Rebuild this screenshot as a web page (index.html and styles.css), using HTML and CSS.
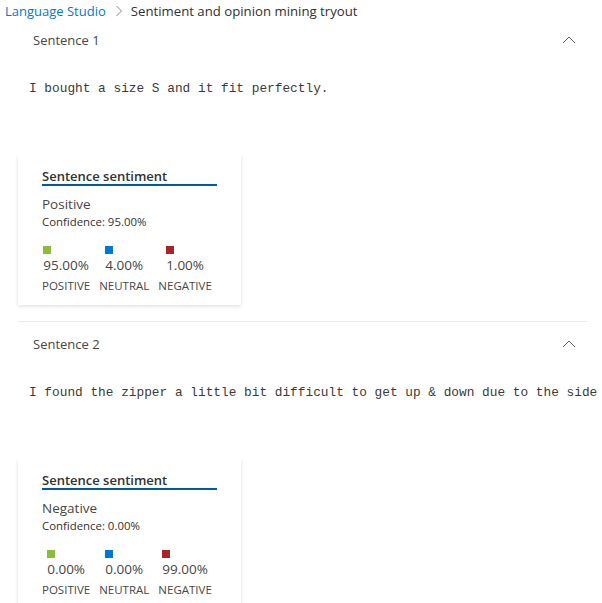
FILE: index.html
```html
<!DOCTYPE html>
<html>
<head>
<meta charset="utf-8">
<link rel="stylesheet" href="styles.css">
</head>
<body>
<nav class="crumbs">
  <a class="crumb-link">Language Studio</a>
  <svg class="crumb-sep" width="8" height="12" viewBox="0 0 8 12"><path d="M1.5 1 L6.5 6 L1.5 11" fill="none" stroke="#8a8886" stroke-width="1"/></svg>
  <span class="crumb-current">Sentiment and opinion mining tryout</span>
</nav>

<section class="sentence">
  <div class="sentence-head">
    <span class="sentence-title">Sentence 1</span>
    <svg class="chev" width="14" height="8" viewBox="0 0 14 8"><path d="M1 7 L7 1 L13 7" fill="none" stroke="#605e5c" stroke-width="1"/></svg>
  </div>
  <div class="sentence-text">I bought a size S and it fit perfectly.</div>
  <div class="card">
    <div class="card-title">Sentence sentiment</div>
    <div class="label-main">Positive</div>
    <div class="confidence">Confidence: 95.00%</div>
    <div class="scores">
      <div class="score"><div class="value"><span class="swatch pos"></span><span class="pct">95.00%</span></div><span class="kind">POSITIVE</span></div>
      <div class="score"><div class="value"><span class="swatch neu"></span><span class="pct">4.00%</span></div><span class="kind">NEUTRAL</span></div>
      <div class="score"><div class="value"><span class="swatch neg"></span><span class="pct">1.00%</span></div><span class="kind">NEGATIVE</span></div>
    </div>
  </div>
</section>

<section class="sentence divided">
  <div class="sentence-head">
    <span class="sentence-title">Sentence 2</span>
    <svg class="chev" width="14" height="8" viewBox="0 0 14 8"><path d="M1 7 L7 1 L13 7" fill="none" stroke="#605e5c" stroke-width="1"/></svg>
  </div>
  <div class="sentence-text">I found the zipper a little bit difficult to get up &amp; down due to the side</div>
  <div class="card">
    <div class="card-title">Sentence sentiment</div>
    <div class="label-main">Negative</div>
    <div class="confidence">Confidence: 0.00%</div>
    <div class="scores">
      <div class="score"><div class="value"><span class="swatch pos"></span><span class="pct">0.00%</span></div><span class="kind">POSITIVE</span></div>
      <div class="score"><div class="value"><span class="swatch neu"></span><span class="pct">0.00%</span></div><span class="kind">NEUTRAL</span></div>
      <div class="score"><div class="value"><span class="swatch neg"></span><span class="pct">99.00%</span></div><span class="kind">NEGATIVE</span></div>
    </div>
  </div>
</section>
</body>
</html>
```
FILE: styles.css
```css
html, body {
  margin: 0;
  padding: 0;
  background: #fff;
  overflow: hidden;
}
body {
  font-family: "Open Sans", "Noto Sans", sans-serif;
  color: #323130;
  width: 602px;
  height: 603px;
}
.crumbs {
  display: flex;
  align-items: center;
  height: 22px;
  padding-left: 5px;
  font-size: 13px;
  white-space: nowrap;
}
.crumb-link {
  color: #0078d4;
}
.crumb-sep {
  margin: 0 8px 0 9px;
}
.crumb-current {
  color: #323130;
  font-size: 13.2px;
}
.sentence {
  margin: 0 15px 0 18px;
}
.sentence.divided {
  border-top: 1px solid #edebe9;
  margin-top: 16px;
}
.sentence-head {
  display: flex;
  align-items: center;
  justify-content: space-between;
  height: 36px;
  padding: 0 11px 0 15px;
  font-size: 13px;
  color: #484644;
}
.divided .sentence-head {
  padding-top: 4px;
}
.sentence-text {
  font-family: "Liberation Mono", "DejaVu Sans Mono", monospace;
  font-size: 12.8px;
  color: #3b3a39;
  padding: 22px 0 0 11px;
  height: 36px;
  line-height: 18px;
  white-space: nowrap;
}
.card {
  margin-top: 38px;
  width: 223px;
  height: 151px;
  box-sizing: border-box;
  padding: 14px 24px 0 24px;
  background: #fff;
  box-shadow: 0 1.6px 3.6px rgba(0,0,0,0.13), 0 0.3px 0.9px rgba(0,0,0,0.11);
}
.card-title {
  width: 175px;
  font-size: 13px;
  font-weight: 600;
  color: #323130;
  line-height: 16px;
  border-bottom: 2px solid #005a9e;
}
.label-main {
  margin-top: 9px;
  font-size: 13.5px;
  line-height: 18px;
  color: #484644;
}
.confidence {
  font-size: 11.4px;
  line-height: 17px;
  color: #323130;
}
.scores {
  display: flex;
  gap: 9px;
  margin-top: 16px;
}
.score {
  display: flex;
  flex-direction: column;
  align-items: center;
}
.value {
  display: flex;
  flex-direction: column;
  align-items: flex-start;
}
.swatch {
  width: 8px;
  height: 8px;
}
.swatch.pos { background: #8cbd3a; }
.swatch.neu { background: #0078d4; }
.swatch.neg { background: #a4262c; }
.pct {
  margin-top: 1px;
  font-size: 13.5px;
  line-height: 20px;
  color: #484644;
}
.kind {
  margin-top: 3px;
  font-size: 11.5px;
  line-height: 16px;
  color: #484644;
}
```
